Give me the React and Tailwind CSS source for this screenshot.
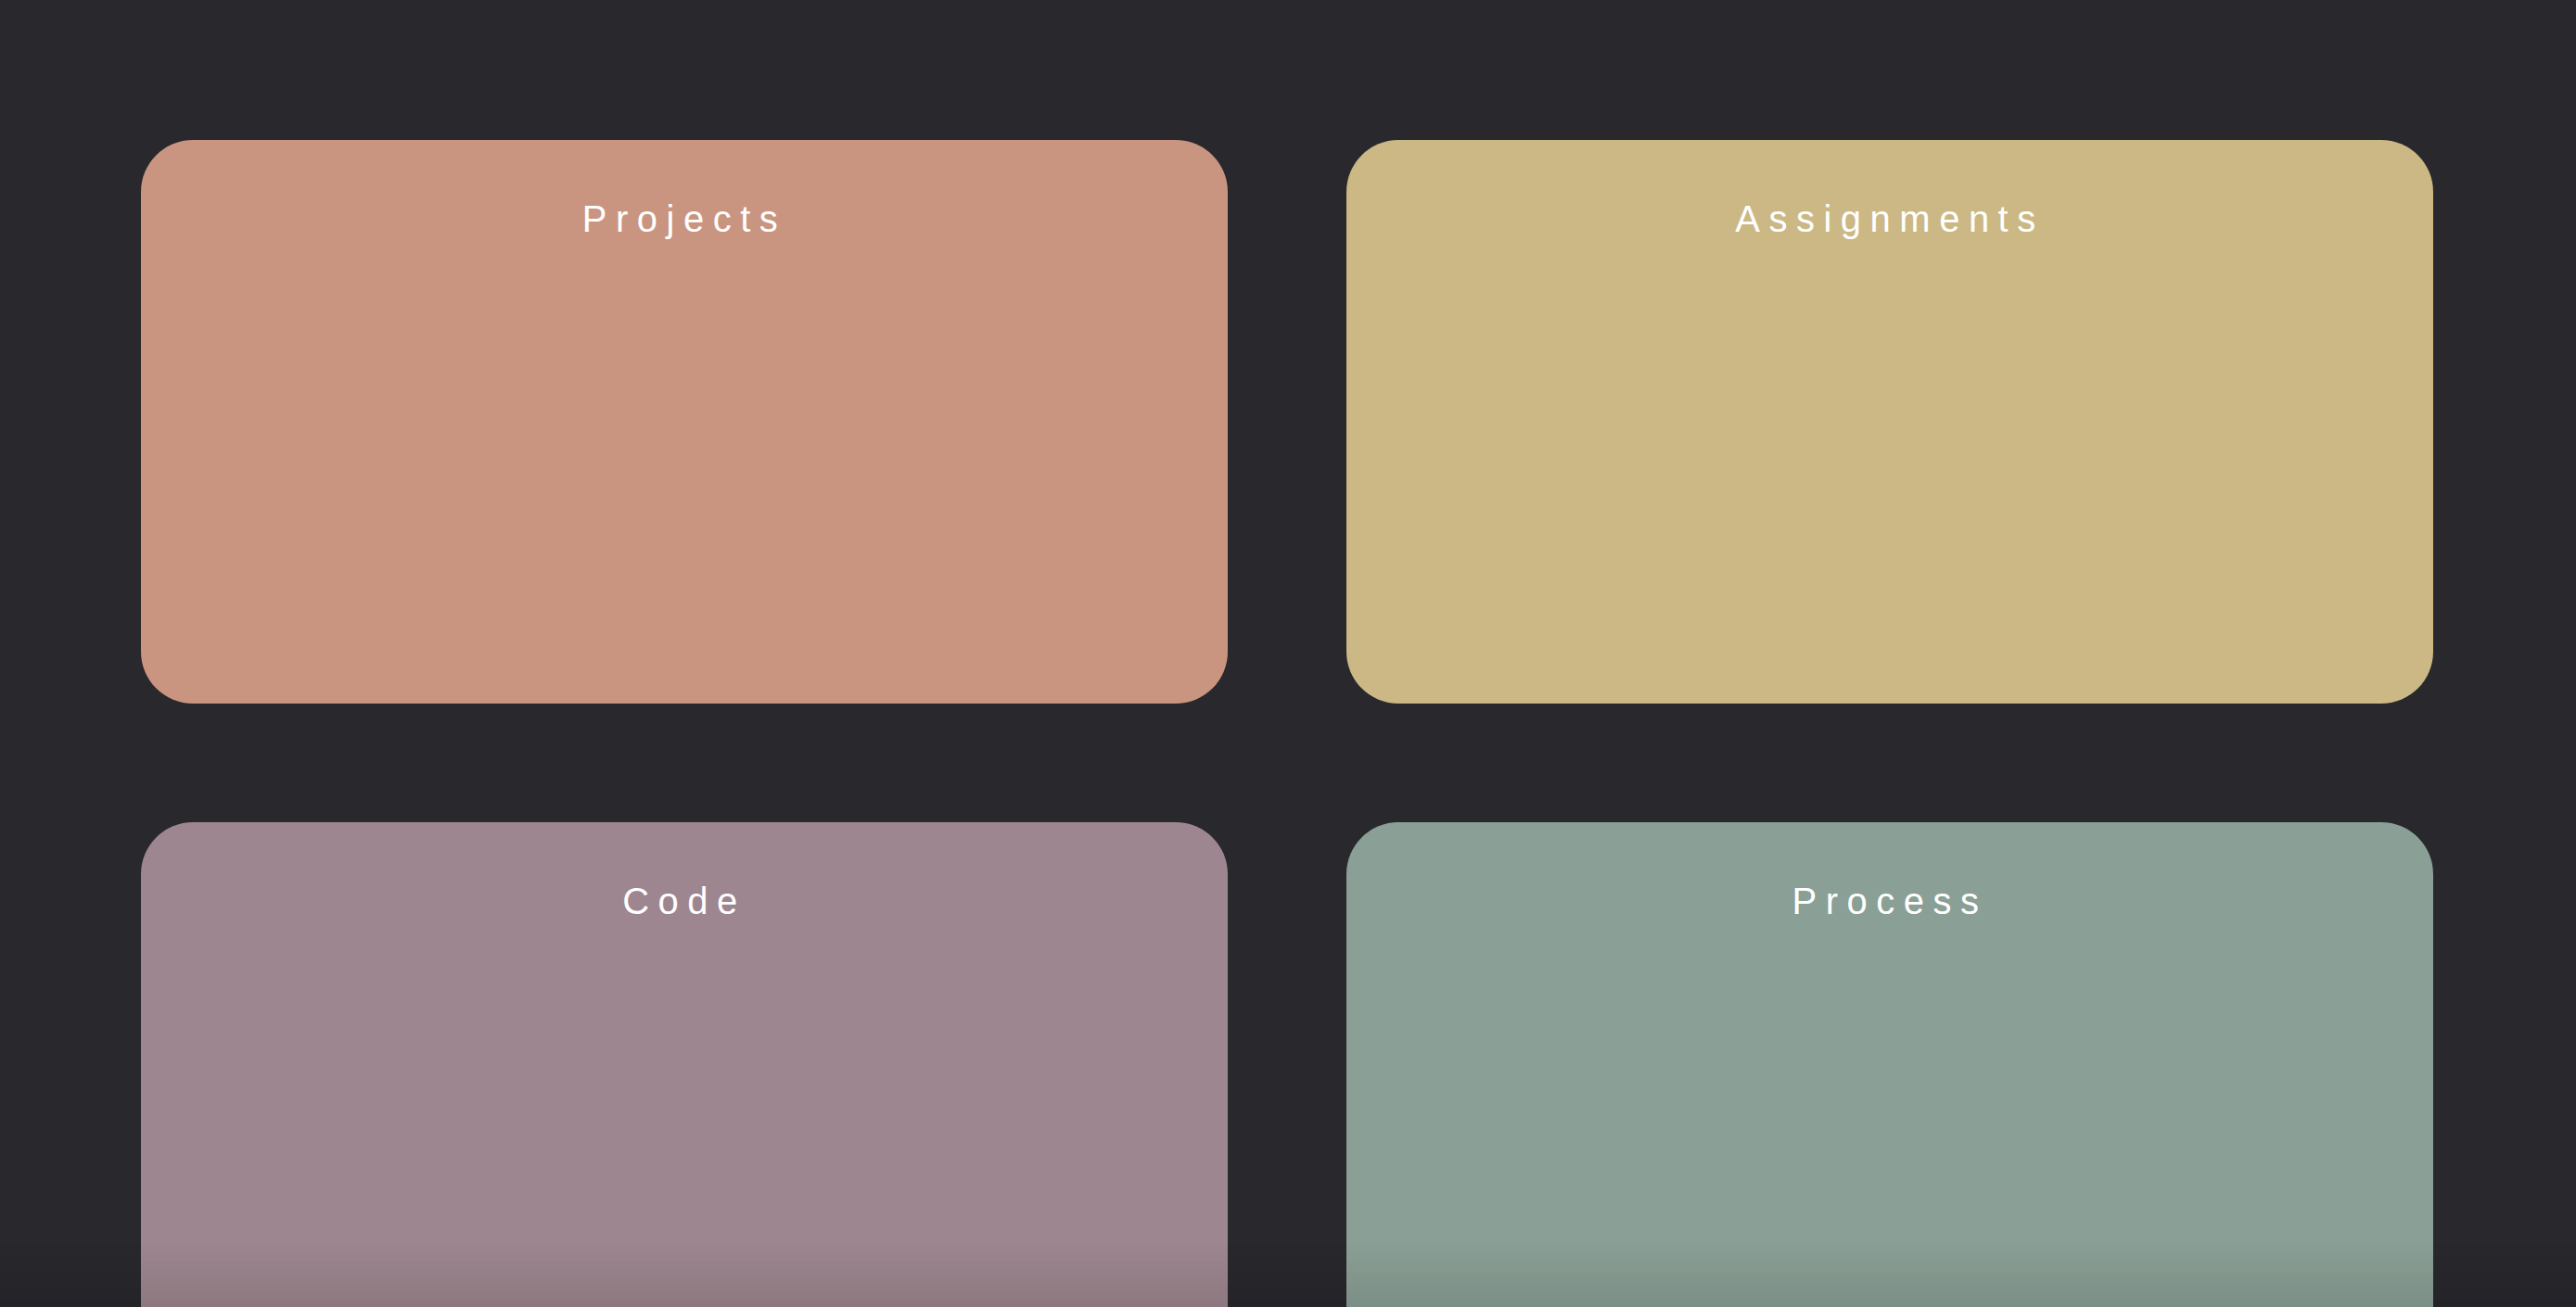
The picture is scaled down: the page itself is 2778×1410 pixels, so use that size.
import React from 'react';

const SECTIONS = [
  { title: 'Projects', color: 'bg-[#c99581]' },
  { title: 'Assignments', color: 'bg-[#cbb884]' },
  { title: 'Code', color: 'bg-[#9d868f]' },
  { title: 'Process', color: 'bg-[#8a9f95]' },
];

const App = () => {
  return (
    <div className="min-h-screen bg-[#28282d] font-['Liberation_Sans',Arial,sans-serif]">
      <main className="grid grid-cols-2 gap-x-[128px] gap-y-[128px] pl-[152px] pr-[154px] pt-[151px] pb-[151px]">
        {SECTIONS.map((section) => (
          <div key={section.title} className={`h-[608px] rounded-[56px] ${section.color}`}>
            <h2 className="pt-[62px] text-center text-[40px] leading-[46px] tracking-[9.5px] text-white">
              {section.title}
            </h2>
          </div>
        ))}
      </main>

      {/* bottom shade over the viewport edge */}
      <div className="pointer-events-none fixed inset-x-0 bottom-0 h-[70px] bg-gradient-to-b from-transparent to-black/10" />
    </div>
  );
};

export default App;
